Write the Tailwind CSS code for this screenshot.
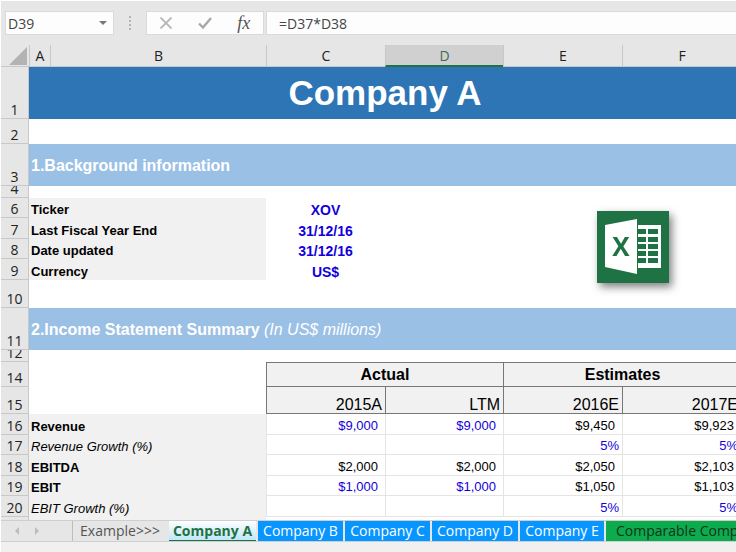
<!DOCTYPE html>
<html lang="en">
<head>
    <meta charset="UTF-8">
    <meta name="viewport" content="width=device-width, initial-scale=1.0">
    <title>Company A</title>
    <script src="https://cdn.jsdelivr.net/npm/@tailwindcss/browser@4"></script>
</head>
<body class="flex flex-col h-screen overflow-hidden bg-[#e6e6e6] border-t border-l border-white font-['Open_Sans','Noto_Sans',sans-serif] text-[14px] text-[#222]">
    <!-- Formula bar -->
    <header class="flex shrink-0 pt-2.5 pb-2.5 pl-1 h-11">
        <div class="flex items-center w-[109px] h-6 bg-[#fdfdfd] border border-[#dadada]">
            <input type="text" aria-label="Name box" value="D39" class="w-0 flex-1 pl-0.5 outline-none text-[#444]">
            <button aria-label="Open name list" class="w-5 h-full flex items-center justify-center">
                <svg class="w-2 h-1" viewBox="0 0 8 4"><path d="M0 0h8L4 4z" fill="#777"/></svg>
            </button>
        </div>
        <div class="flex flex-col justify-center items-center gap-0.5 w-8 h-6">
            <span class="size-0.5 bg-[#b5b5b5]"></span>
            <span class="size-0.5 bg-[#b5b5b5]"></span>
            <span class="size-0.5 bg-[#b5b5b5]"></span>
            <span class="size-0.5 bg-[#b5b5b5]"></span>
        </div>
        <div class="flex items-center w-[118px] h-6 bg-[#fdfdfd] border border-[#dadada]">
            <button aria-label="Cancel" class="flex-1 flex justify-center">
                <svg class="size-3" viewBox="0 0 12 12" fill="none" stroke="#b4b4b4" stroke-width="1.8"><path d="M0.5 0.5l11 11M11.500.5l-11 11"/></svg>
            </button>
            <button aria-label="Enter" class="flex-1 flex justify-center">
                <svg class="w-3.5 h-3" viewBox="0 0 14 12" fill="none" stroke="#a8a8a8" stroke-width="2.4"><path d="M1 6.500l4 4L13 1"/></svg>
            </button>
            <button aria-label="Insert function" class="flex-1 font-['Liberation_Serif',serif] italic text-[18px] leading-5 text-[#555]">fx</button>
        </div>
        <input type="text" aria-label="Formula" value="=D37*D38" class="w-0 flex-1 ml-0.5 h-6 pl-3 bg-[#fdfdfd] border border-r-0 border-[#dadada] outline-none text-[#444]">
    </header>

    <!-- Sheet -->
    <main class="flex-1 min-h-0 overflow-hidden bg-white">
        <table class="table-fixed w-full min-w-[760px] border-separate border-spacing-0 font-['Liberation_Sans',Arial,sans-serif] text-[13px] leading-4 text-black [&_td]:p-0 [&_th]:p-0 [&_tbody_th]:bg-[#e6e6e6] [&_tbody_th]:border-b [&_tbody_th]:border-r [&_tbody_th]:border-[#c8c8c8] [&_tbody_th]:font-normal [&_tbody_th]:align-bottom [&_tbody_th]:text-[14px] [&_tbody_th]:text-[#222] [&_tbody_th]:font-['Open_Sans','Noto_Sans',sans-serif]">
            <colgroup>
                <col class="w-7"><col class="w-[21px]"><col class="w-[216px]"><col class="w-[119px]"><col class="w-[118px]"><col class="w-[119px]"><col class="w-[119px]"><col>
            </colgroup>
            <thead class="font-['Open_Sans','Noto_Sans',sans-serif] text-[14px] bg-[#e6e6e6] text-[#222] [&_th]:font-normal [&_th]:border-l [&_th]:border-b [&_th]:border-[#c8c8c8]">
                <tr class="h-[22px]">
                    <th class="border-l-0!"><svg class="ml-auto mr-0.5 w-[18px] h-[18px]" viewBox="0 0 18 18"><path d="M18 0v18H0z" fill="#b3b3b3"/></svg></th>
                    <th>A</th>
                    <th>B</th>
                    <th>C</th>
                    <th class="pt-px! bg-[#d0d0d0] border-b-2! border-b-[#217346]! text-[#3f6b52]">D</th>
                    <th>E</th>
                    <th>F</th>
                    <th></th>
                </tr>
            </thead>
            <tbody>
                <tr class="h-[52px] bg-[#2e75b6]">
                    <th>1</th>
                    <td colspan="6" class="text-center text-white font-bold text-[35px] leading-10">Company A</td>
                    <td></td>
                </tr>
                <tr class="h-[25px]"><th>2</th><td colspan="7"></td></tr>
                <tr class="h-[42px] bg-[#9bc0e6]">
                    <th>3</th>
                    <td colspan="7" class="pt-0.5! pl-0.5! text-white font-bold text-[16px]">1.Background information</td>
                </tr>
                <tr class="h-3"><th><div class="flex items-end justify-center h-[11px] overflow-hidden">4</div></th><td colspan="7"></td></tr>
                <tr class="h-5 align-bottom">
                    <th>6</th>
                    <td colspan="2" class="pl-0.5! bg-[#f1f1f1] font-bold">Ticker</td>
                    <td class="text-center font-bold text-[14px] text-[#1400dc]">XOV</td>
                    <td></td>
                    <!-- Excel logo spans the empty cells of E6:F9 -->
                    <td colspan="3" rowspan="4" class="pl-[94px]! align-middle">
                        <svg class="size-[72px] mt-2 -mb-2 drop-shadow-[3px_4px_4px_#00000080]" viewBox="0 0 72 72" role="img" aria-label="Excel">
                            <rect width="72" height="72" fill="#1f7244"/>
                            <path d="M39 14h25v43H39z" fill="#fff"/>
                            <path d="M41 18h8v5h-8zM51 18h10v5H51zM41 26h8v5h-8zM51 26h10v5H51zM41 33h8v5h-8zM51 33h10v5H51zM41 40h8v5h-8zM51 40h10v5H51zM41 47h8v5h-8zM51 47h10v5H51z" fill="#1f7244"/>
                            <path d="M39 8h2v54h-2z" fill="#1f7244"/>
                            <path d="M8 14L40 8v55L8 56z" fill="#fff"/>
                            <text x="24" y="45" text-anchor="middle" font-family="Open Sans" font-weight="700" font-size="26" fill="#1f7244">X</text>
                        </svg>
                    </td>
                </tr>
                <tr class="h-[21px] align-bottom">
                    <th>7</th>
                    <td colspan="2" class="pl-0.5! bg-[#f1f1f1] font-bold">Last Fiscal Year End</td>
                    <td class="text-center font-bold text-[14px] text-[#1400dc]">31/12/16</td>
                    <td></td>
                </tr>
                <tr class="h-5 align-bottom">
                    <th>8</th>
                    <td colspan="2" class="pl-0.5! bg-[#f1f1f1] font-bold">Date updated</td>
                    <td class="text-center font-bold text-[14px] text-[#1400dc]">31/12/16</td>
                    <td></td>
                </tr>
                <tr class="h-[21px] align-bottom">
                    <th>9</th>
                    <td colspan="2" class="pl-0.5! bg-[#f1f1f1] font-bold">Currency</td>
                    <td class="text-center font-bold text-[14px] text-[#1400dc]">US$</td>
                    <td></td>
                </tr>
                <tr class="h-7"><th>10</th><td colspan="7"></td></tr>
                <tr class="h-[42px] bg-[#9bc0e6]">
                    <th>11</th>
                    <td colspan="7" class="pt-0.5! pl-0.5! text-white text-[16px]"><b>2.Income Statement Summary</b> <i>(In US$ millions)</i></td>
                </tr>
                <tr class="h-3"><th><div class="flex items-end justify-center h-[11px] overflow-hidden">12</div></th><td colspan="7"></td></tr>
                <tr class="h-[25px] text-[16px] font-bold text-center">
                    <th>14</th>
                    <td colspan="2"></td>
                    <td colspan="2" class="pt-px! bg-[#f1f1f1] border-t border-l border-b border-[#777]">Actual</td>
                    <td colspan="2" class="pt-px! bg-[#f1f1f1] border-t border-l border-b border-[#777]">Estimates</td>
                    <td class="bg-[#f1f1f1] border-t border-b border-[#777]"></td>
                </tr>
                <tr class="h-[27px] text-[16px] text-right align-bottom [&_td]:pr-[3px]">
                    <th class="text-center">15</th>
                    <td colspan="2"></td>
                    <td class="bg-[#f1f1f1] border-l border-b border-[#777]">2015A</td>
                    <td class="bg-[#f1f1f1] border-l border-b border-[#777]">LTM</td>
                    <td class="bg-[#f1f1f1] border-l border-b border-[#777]">2016E</td>
                    <td class="bg-[#f1f1f1] border-l border-b border-[#777]">2017E</td>
                    <td class="bg-[#f1f1f1] border-l border-b border-[#777]"></td>
                </tr>
                <tr class="h-[21px] align-bottom">
                    <th>16</th>
                    <td colspan="2" class="pl-0.5! bg-[#f1f1f1] font-bold">Revenue</td>
                    <td class="pr-[7px]! text-right border-l border-b border-[#e4e4e4] text-[#1400dc]">$9,000</td>
                    <td class="pr-[7px]! text-right border-l border-b border-[#e4e4e4] text-[#1400dc]">$9,000</td>
                    <td class="pr-[7px]! text-right border-l border-b border-[#e4e4e4]">$9,450</td>
                    <td class="pr-[7px]! text-right border-l border-b border-[#e4e4e4]">$9,923</td>
                    <td class="border-l border-b border-[#e4e4e4]"></td>
                </tr>
                <tr class="h-5 align-bottom">
                    <th>17</th>
                    <td colspan="2" class="pl-0.5! bg-[#f1f1f1] italic">Revenue Growth (%)</td>
                    <td class="border-l border-b border-[#e4e4e4]"></td>
                    <td class="border-l border-b border-[#e4e4e4]"></td>
                    <td class="pr-[3px]! text-right border-l border-b border-[#e4e4e4] text-[#1400dc]">5%</td>
                    <td class="pr-[3px]! text-right border-l border-b border-[#e4e4e4] text-[#1400dc]">5%</td>
                    <td class="border-l border-b border-[#e4e4e4]"></td>
                </tr>
                <tr class="h-[21px] align-bottom">
                    <th>18</th>
                    <td colspan="2" class="pl-0.5! bg-[#f1f1f1] font-bold">EBITDA</td>
                    <td class="pr-[7px]! text-right border-l border-b border-[#e4e4e4]">$2,000</td>
                    <td class="pr-[7px]! text-right border-l border-b border-[#e4e4e4]">$2,000</td>
                    <td class="pr-[7px]! text-right border-l border-b border-[#e4e4e4]">$2,050</td>
                    <td class="pr-[7px]! text-right border-l border-b border-[#e4e4e4]">$2,103</td>
                    <td class="border-l border-b border-[#e4e4e4]"></td>
                </tr>
                <tr class="h-5 align-bottom">
                    <th>19</th>
                    <td colspan="2" class="pl-0.5! bg-[#f1f1f1] font-bold">EBIT</td>
                    <td class="pr-[7px]! text-right border-l border-b border-[#e4e4e4] text-[#1400dc]">$1,000</td>
                    <td class="pr-[7px]! text-right border-l border-b border-[#e4e4e4] text-[#1400dc]">$1,000</td>
                    <td class="pr-[7px]! text-right border-l border-b border-[#e4e4e4]">$1,050</td>
                    <td class="pr-[7px]! text-right border-l border-b border-[#e4e4e4]">$1,103</td>
                    <td class="border-l border-b border-[#e4e4e4]"></td>
                </tr>
                <tr class="h-[21px] align-bottom">
                    <th>20</th>
                    <td colspan="2" class="pl-0.5! bg-[#f1f1f1] italic">EBIT Growth (%)</td>
                    <td class="border-l border-b border-[#e4e4e4]"></td>
                    <td class="border-l border-b border-[#e4e4e4]"></td>
                    <td class="pr-[3px]! text-right border-l border-b border-[#e4e4e4] text-[#1400dc]">5%</td>
                    <td class="pr-[3px]! text-right border-l border-b border-[#e4e4e4] text-[#1400dc]">5%</td>
                    <td class="border-l border-b border-[#e4e4e4]"></td>
                </tr>
                <tr class="h-5">
                    <th></th>
                    <td colspan="2" class="bg-[#f1f1f1]"></td>
                    <td colspan="5"></td>
                </tr>
            </tbody>
        </table>
    </main>

    <!-- Sheet tabs -->
    <footer class="shrink-0 bg-[#f0f0f0] pb-2.5">
        <nav class="flex h-[22px] border-y border-[#cfcfcf] bg-[#e6e6e6] overflow-hidden whitespace-nowrap text-[14px] leading-5">
            <div class="flex items-center gap-4 w-18 pl-3.5 border-r border-[#bdbdbd] shrink-0">
                <button aria-label="Previous sheet"><svg class="w-1 h-2" viewBox="0 0 4 8"><path d="M4 0v8L0 4z" fill="#bcbcbc"/></svg></button>
                <button aria-label="Next sheet"><svg class="w-1 h-2" viewBox="0 0 4 8"><path d="M0 0v8l4-4z" fill="#bcbcbc"/></svg></button>
            </div>
            <div class="flex gap-0.5">
                <a href="#" class="w-[94px] text-center text-[#555]">Example&gt;&gt;&gt;</a>
                <a href="#" class="w-[87px] text-center font-bold text-[#1f7244] bg-linear-to-b from-white to-[#bfe6f8] border-b border-[#1f7244]">Company A</a>
                <a href="#" class="w-[85px] text-center text-white bg-[#0795ff]">Company B</a>
                <a href="#" class="w-[85px] text-center text-white bg-[#0795ff]">Company C</a>
                <a href="#" class="w-[86px] text-center text-white bg-[#0795ff]">Company D</a>
                <a href="#" class="w-[84px] text-center text-white bg-[#0795ff]">Company E</a>
                <a href="#" class="px-2.5 text-[#12321c] bg-[#0cac4e]">Comparable Companies</a>
            </div>
        </nav>
    </footer>
</body>
</html>
